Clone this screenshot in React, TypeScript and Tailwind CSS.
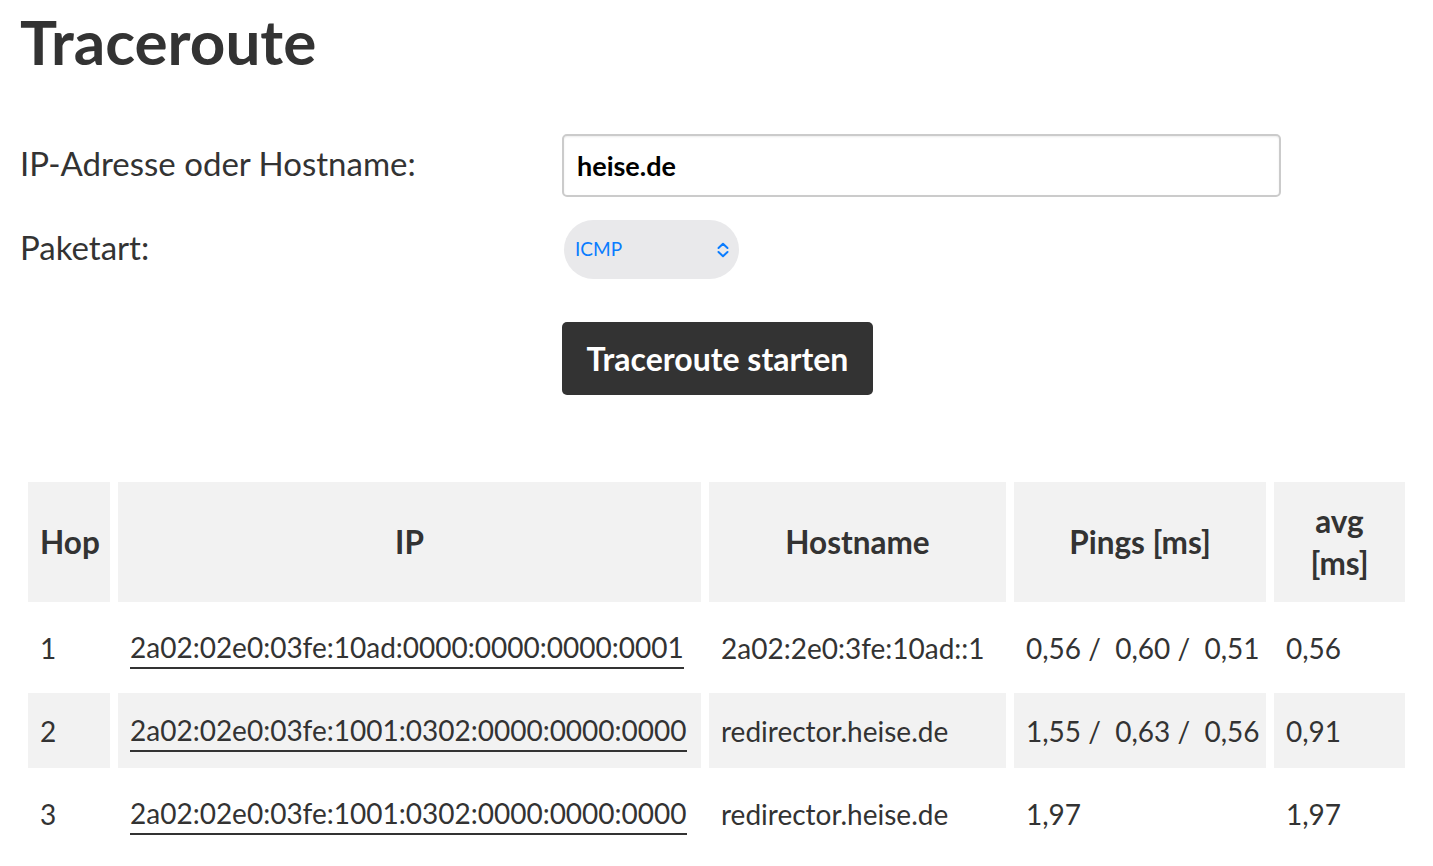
import React from "react";

type Hop = {
  hop: number;
  ip: string;
  host: string;
  pings: string[];
  avg: string;
};

const hops: Hop[] = [
  {
    hop: 1,
    ip: "2a02:02e0:03fe:10ad:0000:0000:0000:0001",
    host: "2a02:2e0:3fe:10ad::1",
    pings: ["0,56", "0,60", "0,51"],
    avg: "0,56",
  },
  {
    hop: 2,
    ip: "2a02:02e0:03fe:1001:0302:0000:0000:0000",
    host: "redirector.heise.de",
    pings: ["1,55", "0,63", "0,56"],
    avg: "0,91",
  },
  {
    hop: 3,
    ip: "2a02:02e0:03fe:1001:0302:0000:0000:0000",
    host: "redirector.heise.de",
    pings: ["1,97"],
    avg: "1,97",
  },
];

function UpDownChevron() {
  return (
    <svg width="14" height="16" viewBox="0 0 14 16" fill="none" aria-hidden="true">
      <path d="M2.5 6 L7 1.8 L11.5 6" stroke="#0a7cff" strokeWidth="2" strokeLinecap="round" strokeLinejoin="round" />
      <path d="M2.5 10 L7 14.2 L11.5 10" stroke="#0a7cff" strokeWidth="2" strokeLinecap="round" strokeLinejoin="round" />
    </svg>
  );
}

export default function App() {
  return (
    <div className="min-h-screen bg-white px-5 font-['Lato',sans-serif] text-[#333]">
      <h1 className="mt-[10px] text-[62px] font-bold leading-[62px]">Traceroute</h1>

      <form
        className="mt-[62px] grid grid-cols-[542px_719px] items-center gap-y-[23px]"
        onSubmit={(e) => e.preventDefault()}
      >
        <label htmlFor="host" className="pb-[5px] text-[33px] leading-[40px]">
          IP-Adresse oder Hostname:
        </label>
        <input
          id="host"
          defaultValue="heise.de"
          className="h-[63px] w-[719px] rounded-[5px] border-2 border-[#cbcbcb] bg-white px-[13px] text-[27px] font-bold text-black shadow-[inset_0_1px_2px_rgba(0,0,0,0.08)] outline-none"
        />

        <label htmlFor="type" className="pb-[5px] text-[33px] leading-[40px]">
          Paketart:
        </label>
        <div className="ml-[2px] flex h-[59px] w-[175px] items-center justify-between rounded-full bg-[#e9e9eb] pl-[11px] pr-[9px]">
          <span id="type" className="text-[19px] text-[#0a7cff]">ICMP</span>
          <UpDownChevron />
        </div>

        <div />
        <div className="mt-[20px]">
          <button
            type="submit"
            className="h-[73px] w-[311px] rounded-[5px] bg-[#333] text-[32px] font-bold text-white"
          >
            Traceroute starten
          </button>
        </div>
      </form>

      <table className="mt-[79px] w-[1393px] table-fixed border-separate border-spacing-[8px] text-[28px]">
        <colgroup>
          <col className="w-[82px]" />
          <col className="w-[583px]" />
          <col className="w-[297px]" />
          <col className="w-[252px]" />
          <col className="w-[131px]" />
        </colgroup>
        <thead>
          <tr className="bg-[#f2f2f2] text-[31.5px] font-bold">
            <th className="px-[12px] py-[18px] text-center leading-[42px]">Hop</th>
            <th className="px-[12px] py-[18px] text-center leading-[42px]">IP</th>
            <th className="px-[12px] py-[18px] text-center leading-[42px]">Hostname</th>
            <th className="px-[12px] py-[18px] text-center leading-[42px]">Pings [ms]</th>
            <th className="px-[12px] py-[18px] text-center leading-[42px]">
              avg
              <br />
              [ms]
            </th>
          </tr>
        </thead>
        <tbody>
          {hops.map((h, i) => (
            <tr key={h.hop} className={i % 2 === 1 ? "bg-[#f2f2f2]" : "bg-white"}>
              <td className="h-[75px] px-[12px] align-middle">{h.hop}</td>
              <td className="h-[75px] px-[12px] align-middle whitespace-nowrap">
                <a href="#" className="inline-block border-b-2 border-[#333] leading-[40px] text-[#333]">
                  {h.ip}
                </a>
              </td>
              <td className="h-[75px] px-[12px] align-middle whitespace-nowrap">{h.host}</td>
              <td className="h-[75px] px-[12px] align-middle whitespace-nowrap">
                {h.pings.join(" /\u00a0 ")}
              </td>
              <td className="h-[75px] px-[12px] align-middle">{h.avg}</td>
            </tr>
          ))}
        </tbody>
      </table>
    </div>
  );
}
